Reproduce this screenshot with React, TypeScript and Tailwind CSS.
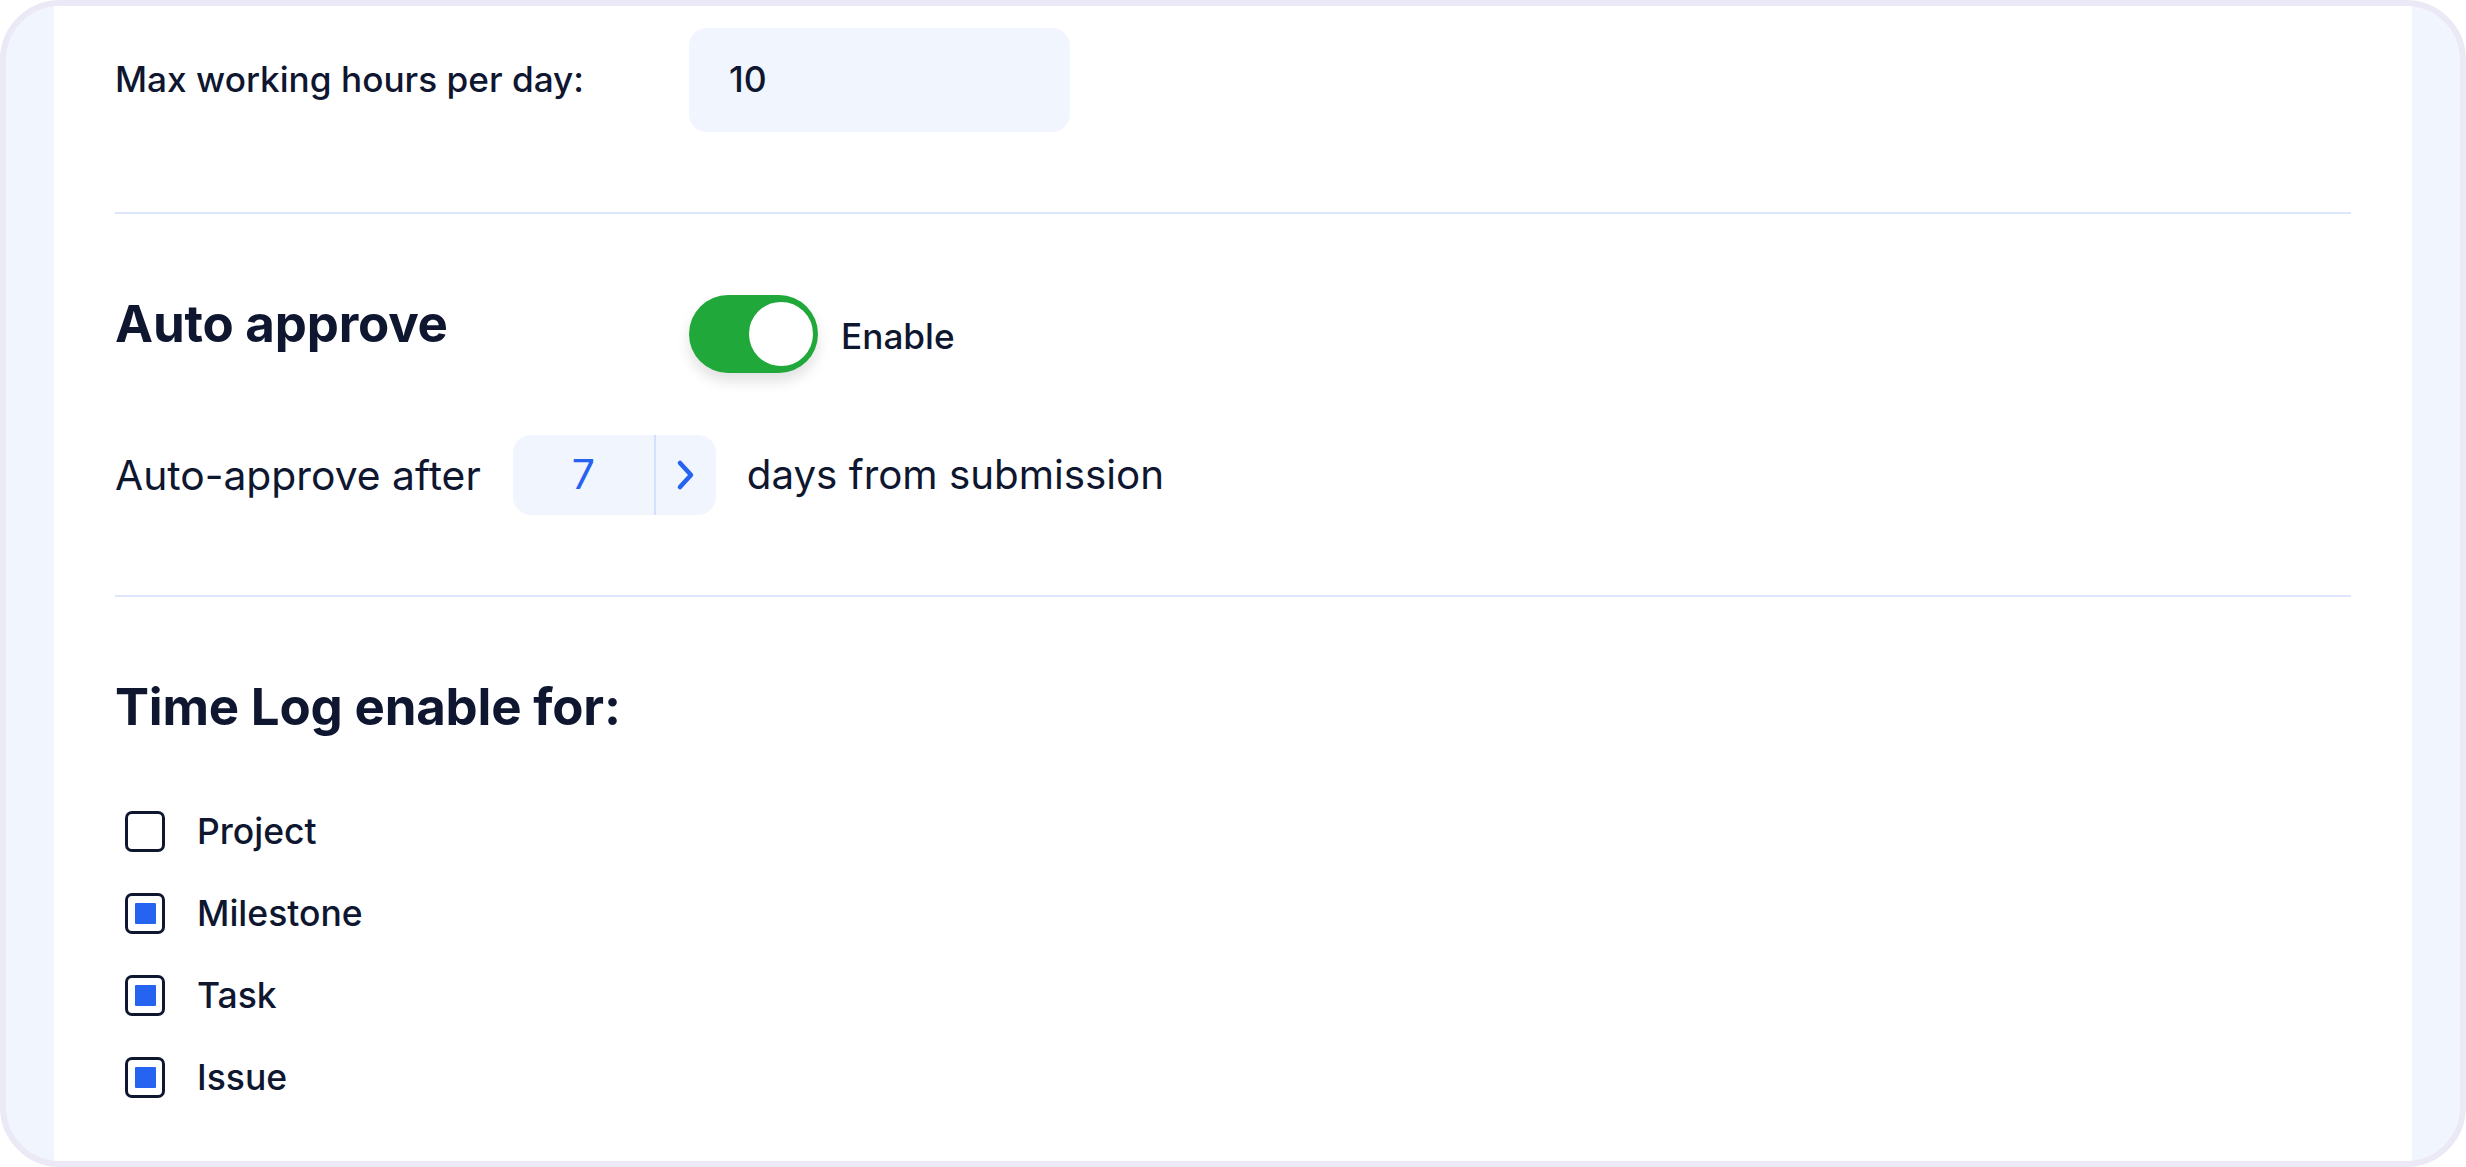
import React from "react";

const font = { fontFamily: "Inter, 'Noto Sans', sans-serif" };

function Checkbox({ checked }: { checked: boolean }) {
  return (
    <div className="w-[40px] h-[41px] rounded-[7px] border-[3px] border-[#0e1630] bg-white flex items-center justify-center shrink-0">
      {checked && <div className="w-[21px] h-[21px] bg-[#2563f0] rounded-[1px]" />}
    </div>
  );
}

export default function App() {
  const items: [string, boolean][] = [
    ["Project", false],
    ["Milestone", true],
    ["Task", true],
    ["Issue", true],
  ];
  return (
    <div className="w-[2466px] h-[1167px] bg-white" style={font}>
      <div className="w-full h-full border-[6px] border-[#ebe9f5] rounded-[60px] bg-[#f1f5fe] overflow-hidden flex px-[48px] text-[#0e1630]">
        <div className="flex-1 bg-white pt-[22px] px-[61px] flex flex-col">
          {/* Row 1 */}
          <div className="flex items-center h-[104px]">
            <div className="w-[574px] text-[35.2px] font-medium leading-none">Max working hours per day:</div>
            <div className="w-[381px] h-[104px] rounded-[18px] bg-[#f0f5fe] flex items-center pl-[40px] text-[35.5px] font-medium">
              10
            </div>
          </div>

          <div className="mt-[80px] h-[2px] bg-[#dde6fd]" />

          {/* Row 2 */}
          <div className="mt-[81px] flex items-start">
            <div className="w-[574px] text-[51px] font-bold leading-[58px] tracking-[-0.2px]">Auto approve</div>
            <div className="flex items-center gap-[23px]">
              <div className="relative w-[129px] h-[78px] rounded-full bg-[#21a83a] shadow-[0_8px_14px_rgba(0,0,0,0.12)]">
                <div className="absolute right-[2px] top-[4px] w-[70px] h-[70px] rounded-full bg-white border-[3px] border-[#21a83a]" />
              </div>
              <span className="text-[35.2px] font-medium pt-[4px]">Enable</span>
            </div>
          </div>

          {/* Row 3 */}
          <div className="mt-[62px] flex items-center">
            <span className="text-[40.8px] leading-none">Auto-approve after</span>
            <div className="ml-[32px] w-[203px] h-[80px] rounded-[18px] bg-[#f0f5fe] flex">
              <div className="w-[141px] flex items-center justify-center text-[41px] text-[#2563f0]">7</div>
              <div className="w-[2px] bg-[#d3e0fb]" />
              <div className="flex-1 flex items-center justify-center">
                <svg width="20" height="32" viewBox="0 0 20 32" fill="none">
                  <path d="M4 4 L15 16 L4 28" stroke="#2563f0" strokeWidth="4.5" strokeLinecap="round" strokeLinejoin="round" />
                </svg>
              </div>
            </div>
            <span className="ml-[31px] text-[40.3px] leading-none">days from submission</span>
          </div>

          <div className="mt-[80px] h-[2px] bg-[#dde6fd]" />

          {/* Row 4 */}
          <div className="mt-[81px] text-[51px] font-bold leading-[58px] tracking-[-0.2px]">Time Log enable for:</div>

          <div className="mt-[75px] flex flex-col gap-[41px] pl-[10px]">
            {items.map(([label, checked]) => (
              <div key={label} className="flex items-center h-[41px] gap-[32px]">
                <Checkbox checked={checked} />
                <span className="text-[35.5px] font-medium leading-none">{label}</span>
              </div>
            ))}
          </div>
        </div>
      </div>
    </div>
  );
}
